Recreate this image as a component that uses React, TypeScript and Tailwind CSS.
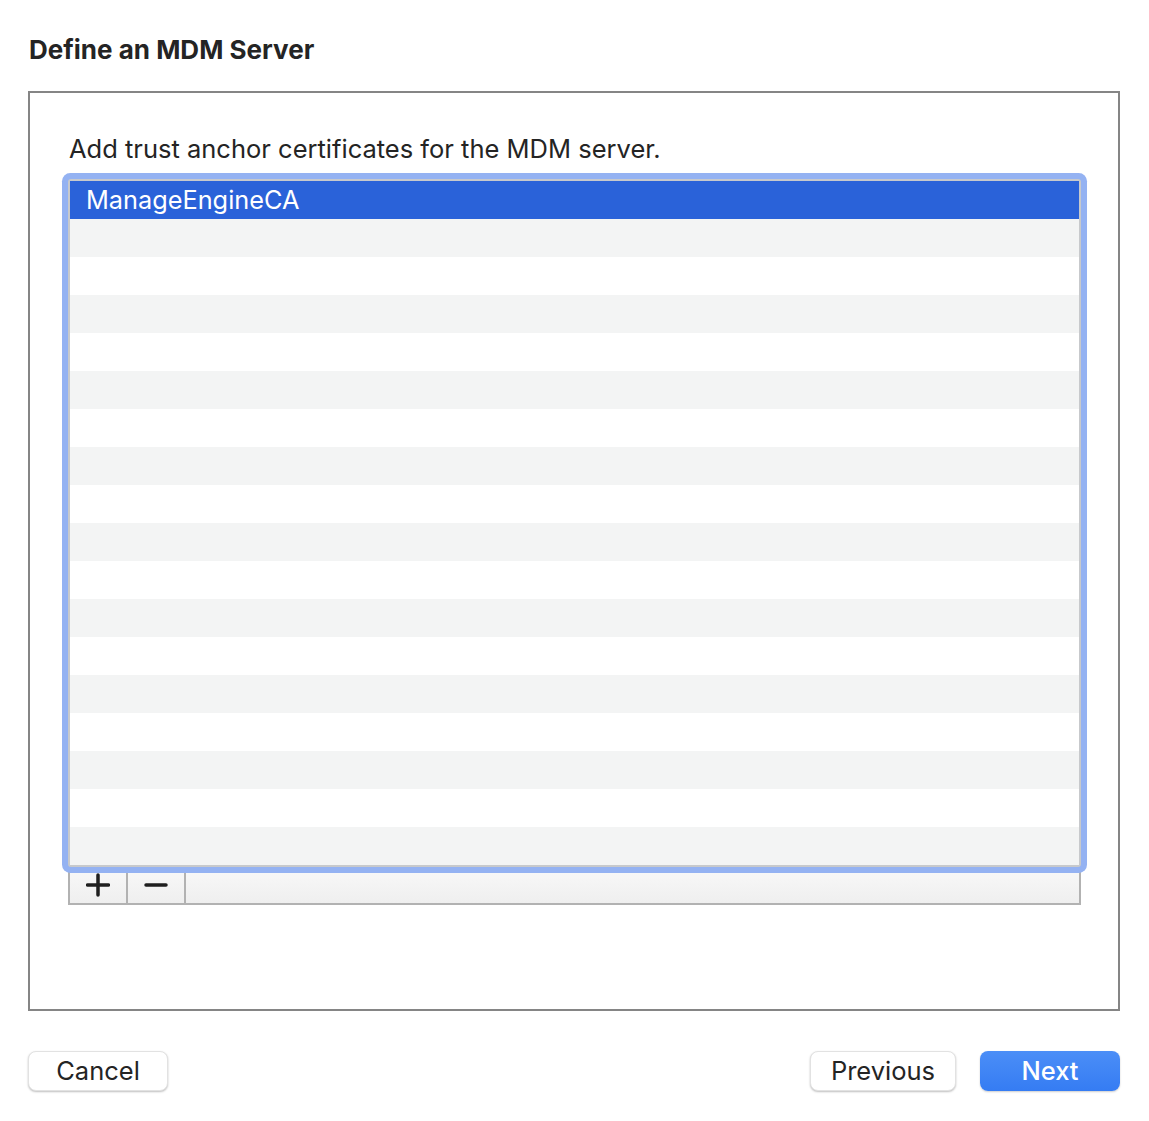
const rows = Array.from({ length: 18 }, (_, i) => i);

export default function App() {
    return (
        <div className="w-[1149px] h-[1121px] bg-white pl-[28px] pr-[29px] pt-[32px] font-['Inter','Liberation_Sans',sans-serif] text-[#242424]">
            <h1 className="text-[26px] leading-[36px] font-bold pl-[1px]">Define an MDM Server</h1>

            <div className="mt-[23px] h-[920px] border-2 border-[#858585] pl-[38px] pr-[37px] pt-[38px]">
                <p className="text-[25.5px] leading-[36px] pl-[1px] text-[#242424]">Add trust anchor certificates for the MDM server.</p>

                <div className="mt-[12px] relative z-10 rounded-[3px] border-2 border-[#c7c9cc] shadow-[0_0_0_6px_#94b2f2] bg-white">
                    {rows.map((i) => (
                        <div
                            key={i}
                            className={
                                i === 0
                                    ? "h-[38px] bg-[#2a62d9] text-white text-[25.3px] leading-[38px] pl-[16px]"
                                    : i % 2 === 1
                                      ? "h-[38px] bg-[#f3f4f4]"
                                      : "h-[38px] bg-white"
                            }
                        >
                            {i === 0 ? "ManageEngineCA" : null}
                        </div>
                    ))}
                </div>

                <div className="flex h-[40px] -mt-[2px] border-2 border-t-0 border-[#b2b2b2] bg-gradient-to-b from-[#f9f9f9] to-[#efefef]">
                    <button className="w-[58px] flex items-center justify-center border-r-2 border-[#b2b2b2] pt-[2px]">
                        <svg width="24" height="24" viewBox="0 0 24 24">
                            <path d="M12 2v20M1.5 12h21" stroke="#1f1f1f" strokeWidth="3.5" strokeLinecap="round" />
                        </svg>
                    </button>
                    <button className="w-[58px] flex items-center justify-center border-r-2 border-[#b2b2b2] pt-[2px]">
                        <svg width="24" height="24" viewBox="0 0 24 24">
                            <path d="M2 12h20" stroke="#1f1f1f" strokeWidth="3.5" strokeLinecap="round" />
                        </svg>
                    </button>
                    <div className="flex-1" />
                </div>
            </div>

            <div className="mt-[40px] flex items-center">
                <button className="w-[140px] h-[40px] rounded-[8px] bg-white border border-[#e2e2e2] shadow-[0_1px_2px_rgba(0,0,0,0.25)] text-[25.5px] text-[#242424]">
                    Cancel
                </button>
                <div className="flex-1" />
                <button className="w-[146px] h-[40px] rounded-[8px] bg-white border border-[#e2e2e2] shadow-[0_1px_2px_rgba(0,0,0,0.25)] text-[25.5px] text-[#242424]">
                    Previous
                </button>
                <button className="ml-[24px] w-[140px] h-[40px] rounded-[8px] bg-gradient-to-b from-[#4b8ef7] to-[#357cf3] shadow-[0_1px_2px_rgba(0,0,0,0.2)] text-[25.5px] text-white font-medium">
                    Next
                </button>
            </div>
        </div>
    );
}
